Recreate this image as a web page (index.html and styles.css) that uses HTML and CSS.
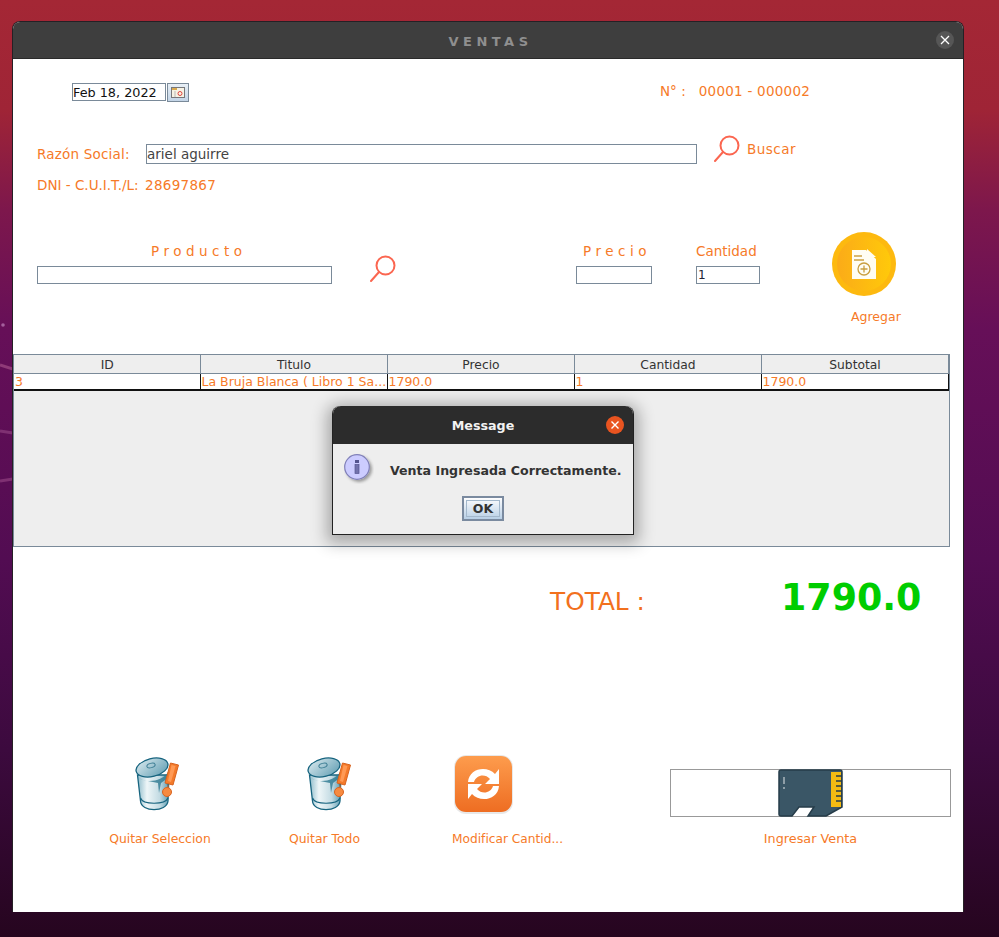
FILE: index.html
```html
<!DOCTYPE html>
<html lang="es">
<head>
<meta charset="utf-8">
<title>Ventas</title>
<link rel="stylesheet" href="styles.css">
</head>
<body>
<svg class="defs" width="0" height="0" aria-hidden="true">
  <defs>
    <linearGradient id="canBody" x1="0" x2="1" y1="0" y2="0">
      <stop offset="0" stop-color="#8fbccb"/><stop offset=".3" stop-color="#eef6f8"/><stop offset=".7" stop-color="#c3dbe3"/><stop offset="1" stop-color="#5f9db2"/>
    </linearGradient>
    <linearGradient id="canLid" x1="0" x2="1" y1="0" y2="1">
      <stop offset="0" stop-color="#dbeaef"/><stop offset="1" stop-color="#5f9db2"/>
    </linearGradient>
    <symbol id="trash" viewBox="0 0 46 56">
      <path d="M3.500 18 L6.500 44 C7 55.500 33 55.500 34 44 L35 18 Z" fill="url(#canBody)" stroke="#17647f" stroke-width="1.300"/>
      <path d="M6.500 41 C9 48 31 48 34 41" fill="none" stroke="#17647f" stroke-width="1.200"/>
      <path d="M5 21 C12 26 28 25 34 15 L34.500 32 L31 23 L27 26 L25 36 L24 26 L9 23 Z" fill="#2c7890" opacity=".8"/>
      <ellipse cx="18" cy="10.500" rx="16.300" ry="9" transform="rotate(-14 18 10.500)" fill="url(#canLid)" stroke="#17647f" stroke-width="1.300"/>
      <ellipse cx="17" cy="8.500" rx="4.200" ry="2.200" transform="rotate(-14 17 8.500)" fill="none" stroke="#3f7f95"/>
      <path d="M36.500 6 L44.500 8 L39 28 L31 26 Z" fill="#f47a2a" stroke="#d8631f"/>
      <path d="M37.500 8 L41.500 9 L37 25 L34 24 Z" fill="#ff9a55"/>
      <path d="M34 28 V31" stroke="#d8631f"/>
      <circle cx="33" cy="35" r="4.500" fill="#f68a40" stroke="#d8631f"/>
    </symbol>
    <symbol id="lens" viewBox="0 0 26 28">
      <circle cx="15.500" cy="10.500" r="9" fill="none" stroke="#fb6650" stroke-width="2"/>
      <path d="M9 17 L1 26" fill="none" stroke="#fb6650" stroke-width="2" stroke-linecap="round"/>
    </symbol>
  </defs>
</svg>

<svg class="streaks" viewBox="0 0 13 937" width="13" height="937" aria-hidden="true">
  <circle cx="3" cy="325" r="1.800" fill="#a4609c"/>
  <path d="M0 365 L13 369" stroke="#8f3a78" stroke-width="3"/>
  <path d="M0 431 L13 433" stroke="#7f3072" stroke-width="3"/>
  <path d="M0 481 L13 479" stroke="#7f3072" stroke-width="3"/>
</svg>

<main class="window">
  <header class="titlebar">
    <h1 class="title">VENTAS</h1>
    <button class="wm-close" type="button" aria-label="Cerrar">
      <svg viewBox="0 0 10 10" width="10" height="10"><path d="M1 1 L9 9 M9 1 L1 9" stroke="#fff" stroke-width="1.300"/></svg>
    </button>
  </header>

  <section class="content">
    <div class="row-date">
      <span class="date-field">Feb 18, 2022</span>
      <span class="date-btn">
        <svg viewBox="0 0 14 11" width="14" height="11">
          <rect x=".5" y=".5" width="13" height="10" fill="#f6f2e4" stroke="#77777a"/>
          <rect x="1" y="1" width="5" height="2" fill="#d9a94e"/>
          <circle cx="9" cy="6.500" r="2" fill="none" stroke="#e0443e"/>
          <path d="M4 4 V10" stroke="#b9b9b9"/>
        </svg>
      </span>
      <span class="lbl number-lbl">N° :</span>
      <span class="lbl number-val">00001 - 000002</span>
    </div>

    <div class="row-client">
      <span class="lbl client-lbl">Razón Social:</span>
      <span class="field client-field">ariel aguirre</span>
      <svg class="lens client-lens"><use href="#lens"/></svg>
      <span class="lbl buscar">Buscar</span>
    </div>

    <div class="row-dni">
      <span class="lbl dni-lbl">DNI - C.U.I.T./L:</span>
      <span class="lbl dni-val">28697867</span>
    </div>

    <div class="row-product">
      <div class="col col-prod">
        <span class="lbl spaced prod-lbl">Producto</span>
        <span class="field box"></span>
      </div>
      <svg class="lens prod-lens"><use href="#lens"/></svg>
      <div class="col col-precio">
        <span class="lbl spaced precio-lbl">Precio</span>
        <span class="field box"></span>
      </div>
      <div class="col col-cant">
        <span class="lbl">Cantidad</span>
        <span class="field box cant-val">1</span>
      </div>
      <div class="col-add">
        <svg viewBox="0 0 64 64" width="64" height="64">
          <defs><linearGradient id="addG" x1="0" x2="1"><stop offset="0" stop-color="#fbab18"/><stop offset="1" stop-color="#ffc90a"/></linearGradient></defs>
          <circle cx="32" cy="32" r="32" fill="#fdb90f"/>
          <circle cx="32" cy="32" r="27" fill="url(#addG)"/>
          <path d="M20 18 H34 L44 27 V47 H20 Z" fill="#fffdf3"/>
          <path d="M35 17 L44 25 H35 Z" fill="#fffdf3"/>
          <path d="M22 24 H30 M22 28 H32" stroke="#cda144" stroke-width="1.300"/>
          <circle cx="32" cy="37" r="6" fill="none" stroke="#c99e3f" stroke-width="1.300"/>
          <path d="M32 33.500 V40.500 M28.500 37 H35.500" stroke="#c99e3f" stroke-width="1.300"/>
        </svg>
        <span class="lbl add-lbl">Agregar</span>
      </div>
    </div>

    <div class="table-pane">
      <table class="grid">
        <thead>
          <tr><th>ID</th><th>Titulo</th><th>Precio</th><th>Cantidad</th><th>Subtotal</th></tr>
        </thead>
        <tbody>
          <tr><td>3</td><td>La Bruja Blanca ( Libro 1 Sa...</td><td>1790.0</td><td>1</td><td>1790.0</td></tr>
        </tbody>
      </table>
    </div>

    <div class="row-total">
      <span class="total-lbl">TOTAL :</span>
      <span class="total-val">1790.0</span>
    </div>

    <div class="row-actions">
      <div class="action act-sel">
        <div class="act-icon"><svg class="trash"><use href="#trash"/></svg></div>
        <span class="lbl-sm">Quitar Seleccion</span>
      </div>
      <div class="action act-all">
        <div class="act-icon"><svg class="trash"><use href="#trash"/></svg></div>
        <span class="lbl-sm">Quitar Todo</span>
      </div>
      <div class="action act-mod">
        <div class="act-icon">
          <svg viewBox="0 0 60 60" width="60" height="60">
            <defs><linearGradient id="modG" x1="0" x2="0" y1="0" y2="1"><stop offset="0" stop-color="#fd9c4d"/><stop offset="1" stop-color="#ee6d22"/></linearGradient></defs>
            <rect x="0" y="0" width="59" height="59" rx="12" fill="#d9d9d9" opacity=".6"/>
            <rect x="1" y="1" width="57" height="56" rx="11" fill="url(#modG)"/>
            <path d="M14 27 C15 13 33 10 41 19 L45 14 V29 H31 L36 24 C31 18 22 20 20 27 Z" fill="#fff"/>
            <path d="M45 31 C44 45 26 48 18 39 L14 44 V29 H28 L23 34 C28 40 37 38 39 31 Z" fill="#fff"/>
          </svg>
        </div>
        <span class="lbl-sm mod-lbl">Modificar Cantid...</span>
      </div>
      <div class="action act-save">
        <div class="save-box">
          <svg viewBox="0 0 65 48" width="65" height="48">
            <path d="M3 1 H62 Q64 1 64 3 V38 L48 47 H30 L36 38 H21 L14 47 H3 Q1 47 1 45 V3 Q1 1 3 1 Z" fill="#3a5666" stroke="#263c49" stroke-width="1.500"/>
            <path d="M6 8 V15 M6 18 V20" stroke="#aab7bd" stroke-width="1.500"/>
            <rect x="53" y="3" width="10" height="35" fill="#f4bb12"/>
            <path d="M58 7 H64 M58 12 H64 M58 17 H64 M58 22 H64 M58 27 H64 M58 32 H64" stroke="#263c49" stroke-width="1.500"/>
          </svg>
        </div>
        <span class="lbl-sm save-lbl">Ingresar Venta</span>
      </div>
    </div>
  </section>
</main>

<aside class="dialog">
  <header class="dlg-bar">
    <span class="dlg-title">Message</span>
    <span class="dlg-close">
      <svg viewBox="0 0 10 10" width="10" height="10"><path d="M1.500 1.500 L8.500 8.500 M8.500 1.500 L1.500 8.500" stroke="#fff" stroke-width="1.400"/></svg>
    </span>
  </header>
  <div class="dlg-body">
    <div class="dlg-msg">
      <svg class="info" viewBox="0 0 30 30" width="30" height="30">
        <defs><filter id="sh" x="-30%" y="-30%" width="170%" height="170%"><feDropShadow dx="2" dy="2" stdDeviation="1.500" flood-color="#000" flood-opacity=".35"/></filter></defs>
        <circle cx="13" cy="13" r="12.300" fill="#ccccff" stroke="#8080b8" stroke-width="1.200" filter="url(#sh)"/>
        <rect x="11" y="6" width="4" height="3" fill="#55558f"/>
        <rect x="11" y="10.500" width="4" height="9" fill="#7272ac" stroke="#55558f" stroke-width=".7"/>
      </svg>
      <span class="dlg-text">Venta Ingresada Correctamente.</span>
    </div>
    <button class="ok" type="button"><span>OK</span></button>
  </div>
</aside>
</body>
</html>
```
FILE: styles.css
```css
* { box-sizing: border-box; }
html, body { margin: 0; padding: 0; }
body {
  position: relative;
  width: 999px;
  height: 937px;
  overflow: hidden;
  font-family: "DejaVu Sans", sans-serif;
  background: linear-gradient(180deg, #a42735 0, #9f2436 110px, #7d174c 210px, #660f58 330px, #520c52 560px, #3c0a3e 750px, #26051f 937px);
}
.defs { position: absolute; }
.streaks { position: absolute; left: 0; top: 0; }

.window {
  position: absolute;
  left: 12px;
  top: 21px;
  width: 952px;
  height: 891px;
  border-radius: 8px 8px 0 0;
  border: 1px solid #252025;
  border-bottom: 0;
  overflow: hidden;
  background: #fff;
  display: flex;
  flex-direction: column;
}
.titlebar {
  flex: none;
  height: 37px;
  background: #3e3e3e;
  border-bottom: 1px solid #2a2a2a;
  display: flex;
  align-items: center;
  justify-content: center;
  position: relative;
}
.title {
  margin: 3px 0 0 0;
  font-size: 13px;
  font-weight: 700;
  letter-spacing: 4.500px;
  color: #8f8f8f;
  padding-left: 5px;
}
.wm-close {
  position: absolute;
  right: 9px;
  top: 9px;
  width: 18px;
  height: 18px;
  padding: 0;
  border: 0;
  border-radius: 50%;
  background: #565656;
  display: flex;
  align-items: center;
  justify-content: center;
}

.content { flex: 1; display: flex; flex-direction: column; padding-top: 24px; }
.lbl { font-size: 13.500px; line-height: 16px; color: #f67a28; white-space: nowrap; }
.lbl-sm { font-size: 12.400px; line-height: 15px; color: #f67a28; white-space: nowrap; }
.spaced { letter-spacing: 4.500px; }

.field {
  display: block;
  background: #fff;
  border: 1px solid #7a8a99;
  color: #444;
  font-size: 13.500px;
  white-space: nowrap;
}

.row-date { display: flex; align-items: flex-start; height: 19px; padding-left: 59px; }
.date-field {
  width: 94px;
  height: 18px;
  border: 1px solid #7a8a99;
  font-size: 12.800px;
  line-height: 17px;
  color: #111;
  white-space: nowrap;
}
.date-btn {
  width: 22px;
  height: 19px;
  margin-left: 1px;
  border: 1px solid #7a8a99;
  background: linear-gradient(180deg, #e8eff6, #c3d5e7);
  display: flex;
  align-items: center;
  justify-content: center;
}
.number-lbl { margin-left: 471px; }
.number-val { margin-left: 13px; letter-spacing: .25px; }

.row-client { display: flex; align-items: flex-start; margin-top: 33px; height: 30px; padding-left: 24px; }
.client-lbl { margin-top: 11px; width: 109px; letter-spacing: .2px; }
.client-field { margin-top: 9px; width: 551px; height: 20px; line-height: 18px; }
.lens { display: block; width: 26px; height: 28px; }
.client-lens { margin-left: 17px; }
.buscar { margin-left: 7px; margin-top: 6px; letter-spacing: .5px; }

.row-dni { display: flex; margin-top: 11px; height: 19px; padding-left: 24px; }
.dni-lbl { width: 108px; line-height: 18px; }
.dni-val { line-height: 18px; letter-spacing: .3px; }

.row-product { display: flex; align-items: flex-start; margin-top: 37px; height: 122px; padding-left: 24px; }
.col { display: flex; flex-direction: column; padding-top: 11px; }
.col .lbl { height: 16px; line-height: 16px; margin-bottom: 7px; }
.box { height: 18px; width: 100%; line-height: 16px; }
.col-prod { width: 295px; }
.prod-lbl { padding-left: 114px; }
.prod-lens { margin: 23px 0 0 38px; }
.col-precio { width: 76px; margin-left: 180px; }
.precio-lbl { padding-left: 7px; }
.col-cant { width: 64px; margin-left: 44px; }
.cant-val { font-size: 12px; padding-left: 1px; color: #223; }
.col-add { width: 80px; margin-left: 72px; display: flex; flex-direction: column; }
.add-lbl { font-size: 12.500px; margin: 13px 0 0 19px; line-height: 15px; }

.table-pane {
  width: 937px;
  height: 193px;
  background: #eeeeee;
  border: 1px solid #7a8a99;
}
.grid { border-collapse: collapse; table-layout: fixed; width: 934px; font-size: 12.300px; }
.grid th {
  width: 187px;
  height: 18px;
  padding: 2px 0 0 1px;
  background: #eeeeee;
  border-right: 1px solid #7a8a99;
  border-bottom: 1px solid #7a8a99;
  color: #333;
  font-weight: 400;
  line-height: 16px;
}
.grid th:first-child { width: 186px; }
.grid td {
  height: 16px;
  padding: 1px 0 0 1px;
  background: #fff;
  border-right: 1px solid #111;
  border-bottom: 2px solid #111;
  color: #f67a28;
  font-size: 12.500px;
  line-height: 14px;
  white-space: nowrap;
  overflow: hidden;
}

.row-total { display: flex; align-items: center; height: 50px; margin-top: 29px; padding-left: 537px; }
.total-lbl { width: 231px; font-size: 24.800px; color: #f2701d; }
.total-val { font-size: 36.400px; font-weight: 700; color: #00cd00; line-height: 44px; margin-bottom: 6px; }

.row-actions { display: flex; align-items: flex-start; margin-top: 129px; }
.action { display: flex; flex-direction: column; align-items: center; }
.act-icon { height: 60px; margin-bottom: 16px; display: flex; align-items: flex-end; }
.trash { display: block; width: 46px; height: 56px; margin-bottom: 2px; }
.act-sel { width: 102px; margin-left: 96px; }
.act-sel .trash { margin-right: 6px; }
.act-all { width: 73px; margin-left: 77px; }
.act-all .trash { margin-left: 9px; }
.act-mod { width: 112px; margin-left: 91px; align-items: flex-start; }
.act-mod .act-icon { margin-left: 2px; margin-bottom: 17px; }
.mod-lbl { font-size: 12.200px; }
.act-save { width: 281px; margin-left: 106px; padding-top: 14px; }
.save-box {
  width: 281px;
  height: 48px;
  border: 1px solid #999;
  background: #fff;
  display: flex;
  justify-content: center;
  margin-bottom: 14px;
}
.save-box svg { margin-left: -1px; margin-top: -1px; }
.save-lbl { font-size: 12.800px; }

.dialog {
  position: absolute;
  left: 332px;
  top: 406px;
  width: 302px;
  height: 129px;
  border-radius: 8px 8px 0 0;
  border: 1px solid #222;
  border-top: 0;
  background: #eeeeee;
  box-shadow: 0 3px 16px 5px rgba(0, 0, 0, .3);
  display: flex;
  flex-direction: column;
}
.dlg-bar {
  position: relative;
  height: 38px;
  flex: none;
  background: #2c2c2c;
  border-radius: 8px 8px 0 0;
  display: flex;
  align-items: center;
  justify-content: center;
}
.dlg-title { color: #f2f2f2; font-size: 12.700px; font-weight: 700; margin-top: 1px; }
.dlg-close {
  position: absolute;
  right: 9px;
  top: 10px;
  width: 18px;
  height: 18px;
  border-radius: 50%;
  background: #e95420;
  display: flex;
  align-items: center;
  justify-content: center;
}
.dlg-body { flex: 1; display: flex; flex-direction: column; align-items: center; }
.dlg-msg { width: 100%; height: 52px; position: relative; padding: 19px 0 0 57px; }
.info { position: absolute; left: 11px; top: 10px; }
.dlg-text { font-size: 12.600px; font-weight: 700; color: #333; white-space: nowrap; line-height: 15px; display: block; }
.ok {
  width: 42px;
  height: 25px;
  padding: 2px;
  border: 2px solid #7a8a9f;
  background: linear-gradient(180deg, #fdfdfe, #b8cfe5);
  display: block;
}
.ok span {
  display: block;
  height: 17px;
  border: 1px solid #a3b8cc;
  font: 700 12.500px/15px "DejaVu Sans", sans-serif;
  color: #333;
}
```
